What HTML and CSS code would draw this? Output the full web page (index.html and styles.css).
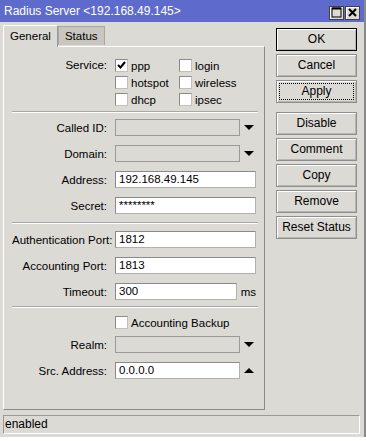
FILE: index.html
```html
<!DOCTYPE html>
<html>
	<head>
		<meta charset="utf-8">
		<title>Radius Server</title>
		<link rel="stylesheet" href="styles.css">
	</head>
	<body>
		<div class="window">
			<div class="titlebar">
				<span class="title">Radius Server &lt;192.168.49.145&gt;</span>
				<div class="title-btns">
					<span class="tbtn">
						<svg width="11" height="11" viewBox="0 0 11 11"><rect x="1" y="1" width="9" height="9" fill="none" stroke="#000" stroke-width="1"/><line x1="1" y1="1.5" x2="10" y2="1.5" stroke="#000" stroke-width="2"/></svg>
					</span>
					<span class="tbtn">
						<svg width="11" height="11" viewBox="0 0 11 11"><path d="M2 2 L9 9 M9 2 L2 9" stroke="#000" stroke-width="2"/></svg>
					</span>
				</div>
			</div>

			<div class="main">
				<div class="left">
					<div class="tabs">
						<div class="tab active">General</div>
						<div class="tab">Status</div>
					</div>
					<div class="panel">
						<div class="row svc">
							<span class="label">Service:</span>
							<div class="checks">
								<label class="check"><span class="box"><svg width="9" height="9" viewBox="0 0 9 9"><path d="M1 4 L3.5 6.5 L8 1" fill="none" stroke="#000" stroke-width="2"/></svg></span>ppp</label>
								<label class="check"><span class="box"></span>login</label>
								<label class="check"><span class="box"></span>hotspot</label>
								<label class="check"><span class="box"></span>wireless</label>
								<label class="check"><span class="box"></span>dhcp</label>
								<label class="check"><span class="box"></span>ipsec</label>
							</div>
						</div>

						<div class="sep sep1"></div>

						<div class="row r-called">
							<span class="label">Called ID:</span>
							<span class="input combo disabled"></span><span class="arrow down"></span>
						</div>
						<div class="row">
							<span class="label">Domain:</span>
							<span class="input combo disabled"></span><span class="arrow down"></span>
						</div>
						<div class="row">
							<span class="label">Address:</span>
							<span class="input full">192.168.49.145</span>
						</div>
						<div class="row">
							<span class="label">Secret:</span>
							<span class="input full">********</span>
						</div>

						<div class="sep sep2"></div>

						<div class="row r-auth">
							<span class="label">Authentication Port:</span>
							<span class="input full">1812</span>
						</div>
						<div class="row">
							<span class="label">Accounting Port:</span>
							<span class="input full">1813</span>
						</div>
						<div class="row">
							<span class="label">Timeout:</span>
							<span class="input short">300</span><span class="unit">ms</span>
						</div>

						<div class="sep sep3"></div>

						<div class="row r-backup">
							<span class="label"></span>
							<label class="check"><span class="box"></span>Accounting Backup</label>
						</div>
						<div class="row r-realm">
							<span class="label">Realm:</span>
							<span class="input combo disabled"></span><span class="arrow down"></span>
						</div>
						<div class="row">
							<span class="label">Src. Address:</span>
							<span class="input combo">0.0.0.0</span><span class="arrow up"></span>
						</div>
					</div>
				</div>

				<div class="buttons">
					<div class="btn default">OK</div>
					<div class="btn">Cancel</div>
					<div class="btn focus">Apply</div>
					<div class="btn gap">Disable</div>
					<div class="btn">Comment</div>
					<div class="btn">Copy</div>
					<div class="btn">Remove</div>
					<div class="btn">Reset Status</div>
				</div>
			</div>

			<div class="statusbar">enabled</div>
		</div>
	</body>
</html>
```
FILE: styles.css
```css
*{
	margin: 0;
	padding: 0;
	box-sizing: border-box;
}

body{
	background-color: #fff;
	font-family: "Liberation Sans", Arial, sans-serif;
	font-size: 11px;
	color: #000;
}

.window{
	width: 366px;
	height: 437px;
	background-color: #dcdad5;
	border-right: 2px solid #8a8a8a;
}

/* title bar */
.titlebar{
	height: 22px;
	background-color: #5e6bcd;
	display: flex;
	align-items: center;
	justify-content: space-between;
	padding: 0 4px 0 4px;
}
.titlebar .title{
	color: #fff;
	font-size: 12px;
}
.title-btns{
	display: flex;
	gap: 1px;
	margin-top: 3px;
}
.tbtn{
	width: 15px;
	height: 14px;
	background-color: #dcdad5;
	border: 1px solid #404040;
	box-shadow: inset 1px 1px #fff;
	display: flex;
	align-items: center;
	justify-content: center;
}

.main{
	display: flex;
	padding: 2px 0 0 3px;
}

/* tabs */
.tabs{
	display: flex;
	align-items: flex-end;
	height: 22px;
	position: relative;
	z-index: 1;
}
.tab{
	height: 19px;
	padding: 0 6px;
	line-height: 18px;
	background-color: #c9c6c0;
	border: 1px solid #a8a8a8;
	border-bottom: none;
	font-size: 11.5px;
	margin-bottom: 1px;
}
.tab.active{
	height: 22px;
	line-height: 21px;
	background-color: #dcdad5;
	border-color: #fff;
	border-right-color: #9a9a9a;
	margin-bottom: -1px;
	padding: 0 6px;
}

.panel{
	width: 262px;
	height: 364px;
	border: 1px solid #fff;
	border-right-color: #8a8a8a;
	border-bottom-color: #8a8a8a;
	padding: 10px 8px 0 8px;
}

/* form rows */
.row{
	display: flex;
	align-items: center;
	height: 17px;
	margin-top: 9px;
}
.label{
	width: 95px;
	margin-right: 8px;
	text-align: right;
	font-size: 11.5px;
	white-space: nowrap;
	flex-shrink: 0;
}
.row.svc{
	height: auto;
	align-items: flex-start;
	margin-top: 0;
}
.row.svc .label{
	margin-top: 2px;
}
.checks{
	display: grid;
	grid-template-columns: 64px 64px;
	grid-auto-rows: 17px;
}
.check{
	display: flex;
	align-items: center;
	font-size: 11.5px;
}
.box{
	width: 13px;
	height: 13px;
	background-color: #fff;
	border: 1px solid #8a8a8a;
	border-right-color: #c0c0c0;
	border-bottom-color: #c0c0c0;
	margin-right: 3px;
	display: flex;
	align-items: center;
	justify-content: center;
}

.input{
	height: 17px;
	background-color: #fff;
	border: 1px solid #8a8a8a;
	border-right-color: #b0b0b0;
	border-bottom-color: #b0b0b0;
	padding-left: 3px;
	line-height: 15px;
	font-size: 11.5px;
}
.input.full{
	width: 143px;
}
.input.combo{
	width: 125px;
}
.input.short{
	width: 123px;
}
.input.disabled{
	background-color: #dcdad5;
	border-color: #9a9a9a;
}

.arrow{
	width: 0;
	height: 0;
	margin-left: 4px;
	border-left: 5px solid transparent;
	border-right: 5px solid transparent;
}
.arrow.down{
	border-top: 5px solid #000;
}
.arrow.up{
	border-bottom: 5px solid #000;
}
.unit{
	margin-left: 4px;
	font-size: 11.5px;
}

.sep{
	height: 2px;
	border-top: 1px solid #a8a8a8;
	border-bottom: 1px solid #fff;
	width: 246px;
}
.sep1{ margin-top: 3px; }
.sep2{ margin-top: 8px; }
.r-called{ margin-top: 6px; }
.r-auth{ margin-top: 7px; }
.sep3{ margin-top: 6px; }
.r-backup{ margin-top: 6px; }
.r-realm{ margin-top: 5px; }

/* buttons */
.buttons{
	display: flex;
	flex-direction: column;
	gap: 3px;
	margin: 4px 0 0 11px;
}
.btn{
	width: 81px;
	height: 23px;
	border: 1px solid #8e8e8e;
	box-shadow: inset 1px 1px #fff, inset -1px -1px #b8b6b0;
	text-align: center;
	line-height: 21px;
	font-size: 12px;
}
.btn.default{
	border-color: #000;
}
.btn.focus{
	outline: 1px dotted #000;
	outline-offset: -4px;
}
.btn.gap{
	margin-top: 6px;
}

.statusbar{
	margin: 5px 0 0 3px;
	width: 357px;
	height: 19px;
	border: 1px solid #9a9a9a;
	border-right-color: #fff;
	border-bottom-color: #fff;
	padding-left: 1px;
	line-height: 17px;
	font-size: 12px;
}
```
